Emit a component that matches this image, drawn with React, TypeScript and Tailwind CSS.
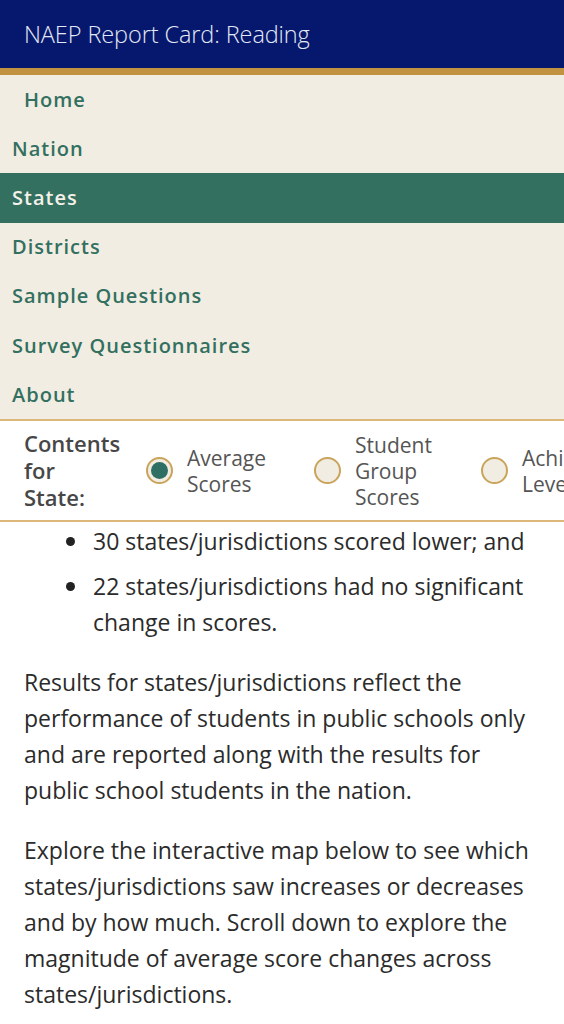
import React from "react";

const navItems = ["Home", "Nation", "States", "Districts", "Sample Questions", "Survey Questionnaires", "About"];

function Radio({ checked }: { checked?: boolean }) {
  return (
    <span className="flex h-[27px] w-[27px] shrink-0 items-center justify-center rounded-full border-2 border-[#c9a45a] bg-[#f2ede3]">
      {checked && <span className="h-[17px] w-[17px] rounded-full bg-[#2f6e62]" />}
    </span>
  );
}

function Bullet({ children, className = "" }: { children: React.ReactNode; className?: string }) {
  return (
    <li className={`flex ${className}`}>
      <span className="flex h-[36px] w-[27.5px] shrink-0 items-center">
        <span className="h-[9px] w-[9px] rounded-full bg-[#222]" />
      </span>
      <span>{children}</span>
    </li>
  );
}

export default function App() {
  return (
    <div className="w-[564px] h-[1024px] overflow-hidden bg-white" style={{ fontFamily: '"Open Sans", "Noto Sans", sans-serif' }}>
      <header className="h-[68px] bg-[#06186d] flex items-center px-[24px] pt-[1px]">
        <h1 className="text-[23.5px] font-light text-[#e3e8f4] tracking-[-0.1px]">NAEP Report Card: Reading</h1>
      </header>
      <div className="h-[7px] bg-[#c1923f]" />
      <nav className="bg-[#f2ede3] border-b-2 border-[#dcb77a]">
        {navItems.map((item, i) => {
          const active = item === "States";
          return (
            <div
              key={item}
              className={`h-[49.2px] flex items-center text-[20px] font-semibold tracking-[1px] ${i === 0 ? "pl-[24px]" : "pl-[12px]"} ${active ? "bg-[#33705f] text-[#f4f1ea]" : "text-[#33705f]"}`}
            >
              {item}
            </div>
          );
        })}
      </nav>
      <div className="h-[101px] flex items-center border-b-2 border-[#dcb77a] overflow-hidden whitespace-nowrap">
        <div className="pl-[24px] w-[146px] shrink-0 text-[22px] font-semibold leading-[27px] text-[#474747] whitespace-normal">
          Contents<br />for<br />State:
        </div>
        <div className="flex items-center gap-[14px] w-[168px] shrink-0">
          <Radio checked />
          <div className="text-[21px] leading-[26px] text-[#555]">Average<br />Scores</div>
        </div>
        <div className="flex items-center gap-[14px] w-[167px] shrink-0">
          <Radio />
          <div className="text-[21px] leading-[26px] text-[#555]">Student<br />Group<br />Scores</div>
        </div>
        <div className="flex items-center gap-[14px] shrink-0">
          <Radio />
          <div className="text-[21px] leading-[26px] text-[#555]">Achievement<br />Levels</div>
        </div>
      </div>
      <div className="px-[24px] text-[23px] leading-[36px] text-[#2b2b2b]">
        <ul className="pl-[41.5px] pt-[1px] mb-[24px]">
          <Bullet className="mb-[9px]">30 states/jurisdictions scored lower; and</Bullet>
          <Bullet>22 states/jurisdictions had no significant change in scores.</Bullet>
        </ul>
        <p className="mb-[24px]">
          Results for states/jurisdictions reflect the performance of students in public schools only and are reported along with the results for public school students in the nation.
        </p>
        <p>
          Explore the interactive map below to see which states/jurisdictions saw increases or decreases and by how much. Scroll down to explore the magnitude of average score changes across states/jurisdictions.
        </p>
      </div>
    </div>
  );
}
